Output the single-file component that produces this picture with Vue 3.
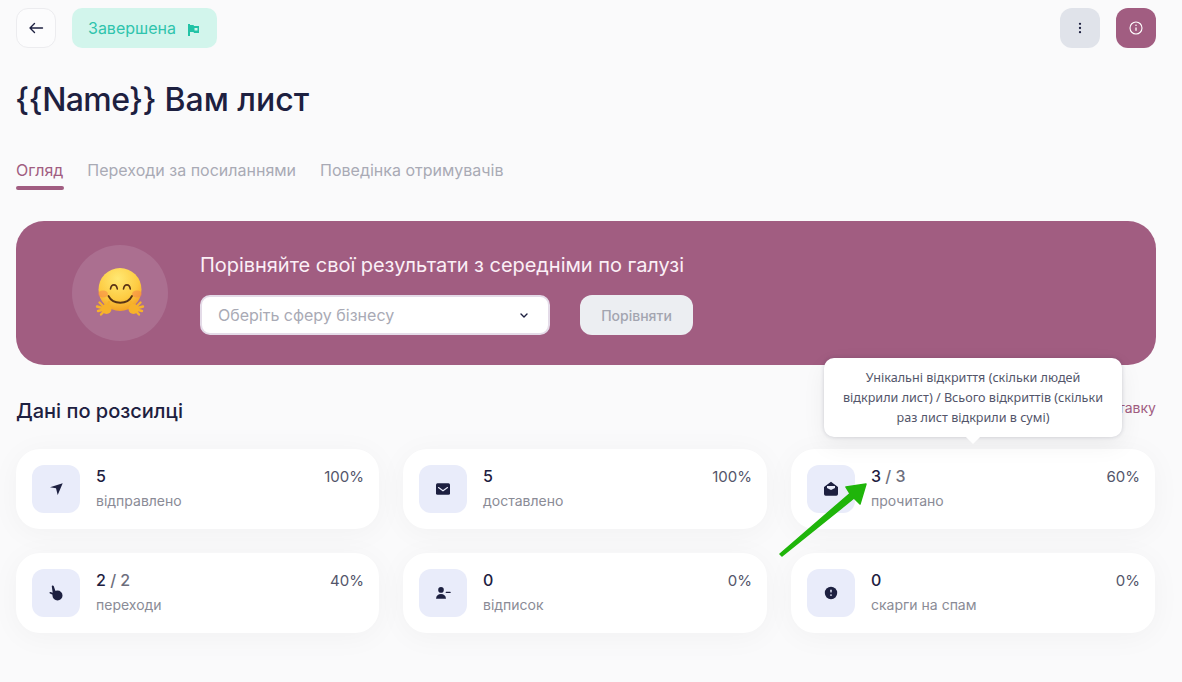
<script setup>
const tabs = ["Огляд", "Переходи за посиланнями", "Поведінка отримувачів"];

const stats = [
  { id: "sent", value: "5", label: "відправлено", percent: "100%" },
  { id: "delivered", value: "5", label: "доставлено", percent: "100%" },
  { id: "read", value: "3", total: "3", label: "прочитано", percent: "60%" },
  { id: "clicks", value: "2", total: "2", label: "переходи", percent: "40%" },
  { id: "unsub", value: "0", label: "відписок", percent: "0%" },
  { id: "spam", value: "0", label: "скарги на спам", percent: "0%" },
];
</script>

<template>
  <div class="page">
    <header class="top">
      <button class="back">
        <svg width="16" height="16" viewBox="0 0 16 16" fill="none" stroke="#1d2040" stroke-width="1.4" stroke-linecap="round" stroke-linejoin="round">
          <path d="M14.500 8H2M6.500 3.500 2 8l4.500 4.500" />
        </svg>
      </button>
      <div class="status">
        Завершена
        <svg width="14" height="16" viewBox="0 0 14 16" fill="#22c3a6">
          <path d="M1 4h2v13H1z" />
          <path d="M3 5h3.500l.5 1H12v7H7l-.5-1H3z" />
          <path d="M7.500 8H10.500v2.500H7.500z" fill="#d2f5ec" />
        </svg>
      </div>
      <div class="spacer"></div>
      <button class="more">
        <svg width="12" height="12" viewBox="0 0 12 12" fill="#1d2040">
          <circle cx="6" cy="1.800" r="1.150" />
          <circle cx="6" cy="6" r="1.150" />
          <circle cx="6" cy="10.200" r="1.150" />
        </svg>
      </button>
      <button class="info">
        <svg width="14" height="14" viewBox="0 0 14 14" fill="none" stroke="#fff" stroke-width="1.100">
          <circle cx="7" cy="7" r="6" />
          <path d="M7 6.400v3.400" stroke-width="1.300" />
          <circle cx="7" cy="4.300" r=".8" fill="#fff" stroke="none" />
        </svg>
      </button>
    </header>

    <h1 class="title"><span class="merge-tag">{{ "{" + "{Name}" + "}" }}</span> Вам лист</h1>

    <nav class="tabs">
      <a v-for="(tab, i) in tabs" :key="tab" class="tab" :class="{ active: i === 0 }">{{ tab }}</a>
    </nav>

    <section class="banner">
      <div class="emoji">
        <svg width="50" height="50" viewBox="0 0 50 50">
          <defs>
            <radialGradient id="face" cx="45%" cy="25%" r="80%">
              <stop offset="0" stop-color="#ffe873" />
              <stop offset="0.6" stop-color="#fdcb42" />
              <stop offset="1" stop-color="#f29a1e" />
            </radialGradient>
          </defs>
          <circle cx="25" cy="21.500" r="21.500" fill="url(#face)" />
          <ellipse cx="8" cy="26" rx="5" ry="3.500" fill="#f5804a" opacity=".5" />
          <ellipse cx="42" cy="26" rx="5" ry="3.500" fill="#f5804a" opacity=".5" />
          <path d="M15.500 21c.8-5.500 6-5.500 6.800 0M28.500 21c.8-5.500 6-5.500 6.800 0" fill="none" stroke="#5a3416" stroke-width="1.600" stroke-linecap="round" />
          <path d="M13.500 28c4.500 9 19 9 23.500 0" fill="none" stroke="#5a3416" stroke-width="1.800" stroke-linecap="round" />
          <g fill="none" stroke="#f7b22a" stroke-width="2.400" stroke-linecap="round">
            <path d="M11 41 4.500 34.500M11 41 2 38.500M11 41 3 43M11 41 6 46.500M11 41l3-7" />
            <path d="M39 41l6.500-6.500M39 41l9-2.500M39 41l8 2M39 41l5 5.500M39 41l-3-7" />
          </g>
          <circle cx="11.500" cy="41" r="5" fill="#f7b22a" />
          <circle cx="38.500" cy="41" r="5" fill="#f7b22a" />
        </svg>
      </div>
      <div class="compare">
        <p class="compare-title">Порівняйте свої результати з середніми по галузі</p>
        <div class="compare-row">
          <div class="select">
            <span>Оберіть сферу бізнесу</span>
            <svg width="8" height="5" viewBox="0 0 8 5" fill="none" stroke="#1d2040" stroke-width="1.400" stroke-linecap="round" stroke-linejoin="round">
              <path d="M1 1l3 3 3-3" />
            </svg>
          </div>
          <button class="compare-btn">Порівняти</button>
        </div>
      </div>
    </section>

    <div class="section-head">
      <h2>Дані по розсилці</h2>
      <a class="section-link">Переглянути доставку</a>
    </div>

    <div class="grid">
      <div v-for="s in stats" :key="s.id" class="card">
        <div class="icon">
          <svg width="16" height="16" viewBox="0 0 16 16" fill="#1d2040">
            <path v-if="s.id === 'sent'" d="M14.700 2.300 2 6.300l6 1L9.700 14z" />
            <template v-else-if="s.id === 'delivered'">
              <rect x="1" y="2.300" width="14" height="11.400" rx="1.500" />
              <path d="M3.500 6.500 8 9.800l4.500-3.300" fill="none" stroke="#e9ecfa" stroke-width="1.100" stroke-linecap="round" />
            </template>
            <template v-else-if="s.id === 'read'">
              <path d="M1 6 8 .8 15 6v7a1.700 1.700 0 0 1-1.700 1.700H2.700A1.700 1.700 0 0 1 1 13z" />
              <path d="M4 5h8v2L8 9 4 7z" fill="#e9ecfa" />
            </template>
            <template v-else-if="s.id === 'clicks'">
              <circle cx="9.500" cy="10.500" r="5" />
              <path d="M3.800 1.500c-.2-1.200 1.500-1.500 1.900-.4l2 5.700-2 3.400-3.700-1.600c-1-.5-.5-1.800.6-1.500l2.100.6z" />
            </template>
            <template v-else-if="s.id === 'unsub'">
              <circle cx="6" cy="4.900" r="2.800" />
              <path d="M1 13.700c.3-3.200 2.200-4.700 5-4.700s4.700 1.500 5 4.700z" />
              <rect x="10.700" y="6.800" width="5" height="1.100" rx=".5" />
            </template>
            <template v-else>
              <circle cx="8" cy="8" r="6.200" />
              <rect x="7.300" y="4.600" width="1.400" height="3" rx=".7" fill="#e9ecfa" />
              <circle cx="8" cy="10.100" r=".85" fill="#e9ecfa" />
            </template>
          </svg>
        </div>
        <div class="card-text">
          <div class="value">{{ s.value }}<span v-if="s.total" class="total"> / {{ s.total }}</span></div>
          <div class="label">{{ s.label }}</div>
        </div>
        <div class="percent">{{ s.percent }}</div>
      </div>
    </div>

    <div class="tooltip">
      Унікальні відкриття (скільки людей відкрили лист) / Всього відкриттів (скільки раз лист відкрили в сумі)
    </div>

    <svg class="arrow" width="100" height="84" viewBox="0 0 100 84">
      <path d="M8 75 78 14.500 74 8 94 5 88 25 82 19 10 77z" fill="#1fb50a" stroke="#1fb50a" stroke-width="1.500" stroke-linejoin="round" />
    </svg>
  </div>
</template>

<style>
html,
body {
  margin: 0;
  background: #fafafb;
}
</style>

<style scoped>
.page {
  position: relative;
  width: 1182px;
  height: 682px;
  box-sizing: border-box;
  padding: 8px 26px 0 16px;
  overflow: hidden;
  background: #fafafb;
  font-family: Inter, "Noto Sans", sans-serif;
  color: #1d2040;
}

.top {
  display: flex;
  align-items: center;
  gap: 16px;
}

.spacer {
  flex: 1;
}

button {
  display: flex;
  align-items: center;
  justify-content: center;
  width: 40px;
  height: 40px;
  padding: 0;
  border: none;
  border-radius: 12px;
  font-family: inherit;
}

.back {
  background: #fcfcfd;
  border: 1px solid #ececef;
}

.status {
  display: flex;
  align-items: center;
  gap: 11px;
  height: 40px;
  padding: 0 16px;
  border-radius: 10px;
  background: #d2f5ec;
  color: #2fc4ad;
  font-size: 16px;
}

.more {
  background: #e0e3ea;
}

.info {
  background: #a15d81;
}

.title {
  margin: 24px 0 0 -1px;
  font-size: 32px;
  line-height: 56px;
  font-weight: 500;
}

.merge-tag {
  letter-spacing: -0.6px;
}

.tabs {
  display: flex;
  gap: 24px;
  margin-top: 30px;
}

.tab {
  position: relative;
  padding-bottom: 6px;
  font-size: 16px;
  line-height: 24px;
  color: #a9aab5;
}

.tab.active {
  color: #a15d81;
}

.tab.active::after {
  content: "";
  position: absolute;
  left: 0;
  right: -1px;
  bottom: -2px;
  height: 4px;
  border-radius: 2px;
  background: #a15d81;
}

.banner {
  display: flex;
  align-items: center;
  gap: 32px;
  height: 144px;
  margin-top: 33px;
  padding-left: 56px;
  border-radius: 28px;
  background: #a15d81;
}

.emoji {
  display: flex;
  align-items: center;
  justify-content: center;
  width: 96px;
  height: 96px;
  border-radius: 50%;
  background: #ab6f90;
}

.compare-title {
  margin: 0 0 16px;
  font-size: 20px;
  line-height: 28px;
  letter-spacing: -0.04px;
  color: #fbeff6;
}

.compare-row {
  display: flex;
  gap: 30px;
}

.select {
  display: flex;
  align-items: center;
  justify-content: space-between;
  box-sizing: border-box;
  width: 350px;
  height: 40px;
  padding: 0 20px 0 16px;
  border: 2px solid #e4dbe8;
  border-radius: 10px;
  background: #fff;
  font-size: 16px;
  color: #a9aab5;
}

.compare-btn {
  width: 113px;
  border-radius: 12px;
  background: #eceef2;
  font-size: 14px;
  font-weight: 500;
  color: #a3a5b0;
}

.section-head {
  display: flex;
  align-items: center;
  justify-content: space-between;
  margin-top: 32px;
  height: 28px;
}

.section-head h2 {
  margin: 0;
  font-size: 20px;
  font-weight: 500;
}

.section-link {
  margin-bottom: 8px;
  font-size: 14px;
  color: #a15d81;
}

.grid {
  display: grid;
  grid-template-columns: 363px 364px 364px;
  gap: 24px;
  margin-top: 24px;
}

.card {
  display: flex;
  gap: 16px;
  height: 80px;
  box-sizing: border-box;
  padding: 16px 15px 16px 16px;
  border-radius: 24px;
  background: #fff;
  box-shadow: 0 4px 30px rgba(0, 0, 0, 0.04);
}

.icon {
  display: flex;
  align-items: center;
  justify-content: center;
  flex: none;
  width: 48px;
  height: 48px;
  border-radius: 12px;
  background: #e9ecfa;
}

.card-text {
  flex: 1;
}

.value {
  font-size: 16px;
  line-height: 22px;
  font-weight: 500;
}

.total {
  color: #6d6e7c;
}

.label {
  margin-top: 2px;
  font-size: 14px;
  line-height: 24px;
  color: #8a8b96;
}

.percent {
  font-size: 15px;
  line-height: 24px;
  color: #53556a;
}

.tooltip {
  position: absolute;
  left: 824px;
  top: 358px;
  box-sizing: border-box;
  width: 298px;
  height: 79px;
  padding: 10px 16px;
  border-radius: 10px;
  background: #fff;
  box-shadow: 0 0 4px rgba(29, 32, 64, 0.18), 0 8px 24px rgba(0, 0, 0, 0.06);
  font-family: "Noto Sans", sans-serif;
  font-size: 12.600px;
  line-height: 20px;
  text-align: center;
  color: #53556a;
}

.tooltip::after {
  content: "";
  position: absolute;
  left: 144px;
  bottom: -5px;
  width: 10px;
  height: 10px;
  background: #fff;
  transform: rotate(45deg);
}

.arrow {
  position: absolute;
  left: 772px;
  top: 479px;
}
</style>
